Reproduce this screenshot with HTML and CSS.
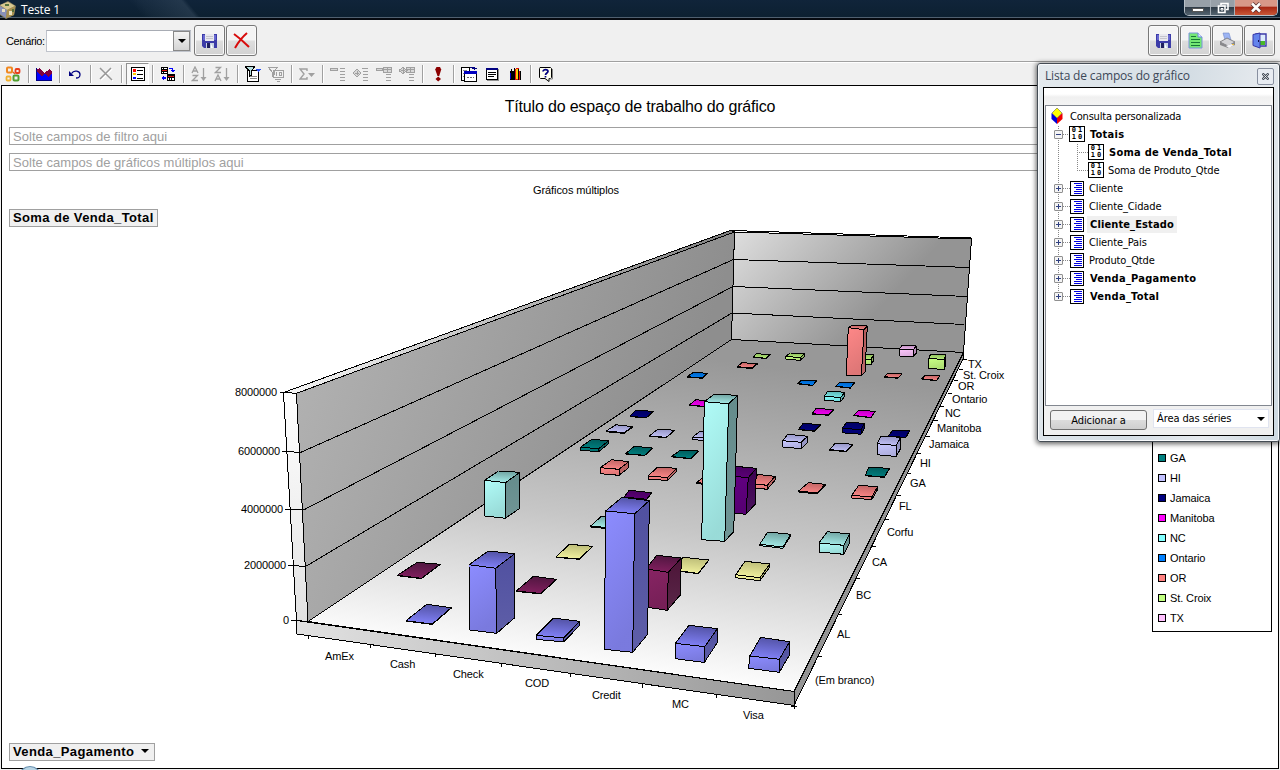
FILE: index.html
```
<!DOCTYPE html>
<html lang="pt">
<head>
<meta charset="utf-8">
<title>Teste 1</title>
<link rel="stylesheet" href="styles.css">
</head>
<body>
<div class="window">
  <header class="titlebar">
    <svg class="app-icon" width="16" height="18" viewBox="0 0 16 18"><path d="M0 4 8 0 16 5 14 14 6 18 0 14Z" fill="#8a8060"/><path d="M0 4 8 1 15 5 7 9Z" fill="#d8c890"/><path d="M0 5 7 9 6 17 0 13Z" fill="#8890b8"/><path d="M7 9 15 5 14 14 6 17Z" fill="#a89050"/><path d="M2 8h3v3H2zM9 10h3v4H9z" fill="#e8e0c0"/><path d="M5 3h4v2H5zM12 8h2v3h-2z" fill="#54703c"/></svg>
    <span class="title">Teste 1</span>
    <div class="caption">
      <span class="cap cap-min"><i></i></span>
      <span class="cap cap-max"><svg width="12" height="12" viewBox="0 0 12 12" fill="none" stroke="#fff" stroke-width="1.600"><path d="M4 3V1.500h7v6H9"/><path d="M1.500 4h6.500v6.500H1.500z"/><path d="M4 6.500h2v1.500H4z" stroke-width="1"/></svg></span>
      <span class="cap cap-close"><svg width="12" height="11" viewBox="0 0 12 11"><path d="M2 1.500 10 9.500M10 1.500 2 9.500" stroke="#5a3030" stroke-width="4.200"/><path d="M2 1.500 10 9.500M10 1.500 2 9.500" stroke="#fff" stroke-width="2.600"/></svg></span>
    </div>
  </header>

  <div class="scenario-bar">
    <label class="scenario-label">Cenário:</label>
    <div class="scenario-combo"><span class="combo-button"><i class="arrow"></i></span></div>
    <button class="big-btn"><svg width="16" height="16" viewBox="0 0 16 16"><path d="M0 1h15v14H2L0 13z" fill="#3c3ca8"/><path d="M1 2h2v5H1zM12 2h2v5h-2z" fill="#6868d0"/><path d="M3 1h9v7H3z" fill="#e8e8ee"/><path d="M4 3h7v1H4zM4 5h7v1H4z" fill="#c4c4cc"/><path d="M4 10h8v5H4z" fill="#c8d4e4"/><path d="M5 10h3v5H5z" fill="#202060"/><path d="M9 11l2 4H9z" fill="#fff"/></svg></button>
    <button class="big-btn"><svg width="17" height="17" viewBox="0 0 17 17"><path d="M1 2 Q8 7 16 15M14 1Q7 7 2 16" fill="none" stroke="#d80c0c" stroke-width="2"/></svg></button>
    <span class="spacer"></span>
    <button class="big-btn"><svg width="16" height="16" viewBox="0 0 16 16"><path d="M0 1h15v14H2L0 13z" fill="#3c3ca8"/><path d="M1 2h2v5H1zM12 2h2v5h-2z" fill="#6868d0"/><path d="M3 1h9v7H3z" fill="#e8e8ee"/><path d="M4 3h7v1H4zM4 5h7v1H4z" fill="#c4c4cc"/><path d="M4 10h8v5H4z" fill="#c8d4e4"/><path d="M5 10h3v5H5z" fill="#202060"/><path d="M9 11l2 4H9z" fill="#fff"/></svg></button>
    <button class="big-btn"><svg width="15" height="17" viewBox="0 0 15 17"><path d="M1 1h9l4 4v11H1z" fill="#74e874" stroke="#7c94dc"/><path d="M10 1v4h4" fill="#dce8ff" stroke="#6c88dc"/><path d="M3 4.500h5M3 7.500h9M3 10.500h9M3 13.500h9" stroke="#187838"/></svg></button>
    <button class="big-btn"><svg width="17" height="17" viewBox="0 0 17 17"><path d="M4 1h6l2 7H6z" fill="#9cb4f4" stroke="#7088c8" stroke-width=".6"/><path d="M1 10 8 6l8 4-7 4z" fill="#d4d4d8" stroke="#707074" stroke-width=".8"/><path d="M1 10v3l8 3 7-3v-3l-7 4z" fill="#88888c"/><path d="M7 14l5-2 3 1-5 3z" fill="#f4f4f8"/><path d="M13 12h2v1h-2z" fill="#f0c040"/></svg></button>
    <button class="big-btn"><svg width="15" height="17" viewBox="0 0 15 17"><path d="M4 2h10v12H4z" fill="#fff" stroke="#3838a8" stroke-width="1.400"/><path d="M8 9h5v4H8z" fill="#48b828"/><path d="M9 3h4v6H9z" fill="#dcecfc"/><path d="M1 2.500 8 1v15l-7-2.500z" fill="#6484ec" stroke="#3838a8"/><path d="M6 8h1v2H6z" fill="#101050"/></svg></button>
  </div>

  <nav class="toolbar">
    <span class="tb"><svg width="16" height="16" viewBox="0 0 16 16" fill="none" stroke-width="2"><rect x="2" y="1.500" width="5" height="5" rx="1" stroke="#f08820"/><rect x="10.500" y="3" width="4" height="4" rx="1" stroke="#e8401c" stroke-width="1.800"/><rect x="1.500" y="10.500" width="4" height="4" rx="1" stroke="#f0b030" stroke-width="1.800"/><rect x="8.500" y="9.500" width="5" height="5" rx="1" stroke="#50a030"/><path d="M8 6l2 2" stroke="#e06028" stroke-width="1.400"/></svg></span>
    <i class="sep"></i>
    <span class="tb"><svg width="16" height="16" viewBox="0 0 16 16" shape-rendering="crispEdges"><path d="M0 4 4 2 8 7 14 3 16 6V14H0z" fill="#800040"/><path d="M0 5 6 10 9 8 12 11 16 8V14H0z" fill="#00f"/><path d="M0 2v12h16" fill="none" stroke="#000080"/></svg></span>
    <i class="sep"></i>
    <span class="tb"><svg width="16" height="16" viewBox="0 0 16 16"><path d="M4.500 7.500C7 3.500 13 5 13 8.500S11 12 9 12" fill="none" stroke="#000080" stroke-width="1.300"/><path d="M2 5v5h5z" fill="#000080"/></svg></span>
    <i class="sep"></i>
    <span class="tb"><svg width="16" height="16" viewBox="0 0 16 16" fill="none"><path d="M3 3 15 15M14 3 3 14" stroke="#fff" stroke-width="1.500"/><path d="M2 2 14 14M13 2 2 13" stroke="#969696" stroke-width="1.500"/></svg></span>
    <i class="sep"></i>
    <span class="tb pressed"><svg width="16" height="16" viewBox="0 0 16 16" shape-rendering="crispEdges"><path d="M1.500 1.500h13v13h-13z" fill="#fff" stroke="#000"/><path d="M3 3h3v3H3z" fill="#f00"/><path d="M3 7h3v2H3z" fill="#fc0"/><path d="M3 11h3v2H3z" fill="#00f"/><path d="M7 4.500h6M7 8.500h6M7 12.500h6" stroke="#000"/></svg></span>
    <i class="sep"></i>
    <span class="tb"><svg width="16" height="16" viewBox="0 0 16 16" shape-rendering="crispEdges"><path d="M1 1h7v7H1zM7 8h8v7H7z" fill="#000"/><path d="M2 2h1v1H2zM4 2h3v1H4zM2 6h1v1H2zM4 6h3v1H4zM8 12h1v2H8zM10 12h1v2h-1zM12 12h2v2h-2z" fill="#fff"/><path d="M2 4h5v1H2zM8 10h6v1H8z" fill="#e01010"/><path d="M9 2h4v2h2l-2 3-3-3h2V3H9zM1 12l3-3v2h2v2H4v2z" fill="#00f"/></svg></span>
    <i class="sep"></i>
    <span class="tb"><svg width="16" height="16" viewBox="0 0 16 16" fill="none" stroke="#a0a0a0" stroke-width="1.300"><path d="M1 7 4 1l3 6M2 5h4M1.500 9.500h5l-5 5h5.500M12.500 2v11"/><path d="M9.500 11h6l-3 4z" fill="#a0a0a0" stroke="none"/></svg></span>
    <span class="tb"><svg width="16" height="16" viewBox="0 0 16 16" fill="none" stroke="#a0a0a0" stroke-width="1.300"><path d="M1.500 1.500h5l-5 5h5.500M1 15 4 9l3 6M2 13h4M12.500 2v11"/><path d="M9.500 11h6l-3 4z" fill="#a0a0a0" stroke="none"/></svg></span>
    <i class="sep"></i>
    <span class="tb"><svg width="16" height="16" viewBox="0 0 16 16" shape-rendering="crispEdges"><path d="M2.500 4.500h11v11h-11z" fill="#fff" stroke="#000"/><path d="M0 .5h10M.5 1l4 4v5l2-1V5l3-4" fill="#b8e0e0" stroke="#000"/><path d="M10 3h6l-3 3z" fill="#2850f0"/><path d="M5 10.500h7M5 12.500h7" stroke="#888"/></svg></span>
    <span class="tb"><svg width="16" height="16" viewBox="0 0 16 16" fill="none" stroke="#a0a0a0" shape-rendering="crispEdges"><path d="M0 1.500h10M1 2l3 4v5l2-2V6l3-4M5.500 4.500h10v7h-10zM8.500 6v4M11 6.500h2v3h-2zM7 13.500h6M8.500 15.500h3"/></svg></span>
    <i class="sep"></i>
    <span class="tb"><svg width="16" height="16" viewBox="0 0 16 16"><path d="M8 5V3H1l4 5-4 5h7v-2" fill="none" stroke="#a0a0a0" stroke-width="1.400"/><path d="M9 7h7l-3.500 4z" fill="#a0a0a0"/></svg></span>
    <i class="sep"></i>
    <span class="tb"><svg width="16" height="16" viewBox="0 0 16 16" fill="#d8d8d8" stroke="#a0a0a0" shape-rendering="crispEdges"><path d="M.5 2.500h7v2h-7zM10 2.500h5M10 5.500h5M10 8.500h5M10 11.500h5M10 14.500h5"/></svg></span>
    <span class="tb"><svg width="16" height="16" viewBox="0 0 16 16" fill="#d8d8d8" stroke="#a0a0a0" shape-rendering="crispEdges"><path d="M4 3 8 7 4 11 0 7zM2 7h4M4 5v4M9 2.500h6M10 5.500h5M10 8.500h5M10 11.500h5M10 14.500h5"/></svg></span>
    <span class="tb"><svg width="16" height="16" viewBox="0 0 16 16" fill="#d8d8d8" stroke="#a0a0a0" shape-rendering="crispEdges"><path d="M.5 2.500h6v2h-6zM7.500 1.500h8v5h-8zM8 3.500h7M11.500 1v5M10 8.500h5M10 11.500h5M10 14.500h5"/></svg></span>
    <span class="tb"><svg width="16" height="16" viewBox="0 0 16 16" fill="#d8d8d8" stroke="#a0a0a0" shape-rendering="crispEdges"><path d="M4 1 8 4.500 4 8 0 4.500zM2 4.500h4M4 2v5M7.500 1.500h8v5h-8zM8 3.500h7M11.500 1v5M10 8.500h5M10 11.500h5M10 14.500h5"/></svg></span>
    <i class="sep"></i>
    <span class="tb"><svg width="16" height="16" viewBox="0 0 16 16"><path d="M6.500 1h3.500l1.200 2.500-2 6.500H7.500L5.200 3.500z" fill="#8c0000"/><path d="M8.200 10.500 11 13l-2.800 2.500L5.500 13z" fill="#8c0000"/></svg></span>
    <i class="sep"></i>
    <span class="tb"><svg width="16" height="16" viewBox="0 0 16 16" shape-rendering="crispEdges"><path d="M.5 1.500h8v13h-8z" fill="#fff" stroke="#000"/><path d="M2 4h4M2 7h2M2 10h2" stroke="#888"/><path d="M3.500 6.500h12v9h-12z" fill="#fff" stroke="#000"/><path d="M3 5h13v3H3z" fill="#0000c0"/><path d="M9 1.500h4v2M11 2.500h5" fill="none" stroke="#000080"/><path d="M6 11.500h2M9 11.500h2M12 11.500h1" stroke="#666"/></svg></span>
    <span class="tb"><svg width="16" height="16" viewBox="0 0 16 16" shape-rendering="crispEdges"><path d="M3 3h12v12H3z" fill="#909090"/><path d="M2.500 2.500h11v11h-11z" fill="#fff" stroke="#000"/><path d="M2 2h12v2H2z" fill="#000080"/><path d="M4 6.500h8M4 8.500h8M4 10.500h6" stroke="#000"/></svg></span>
    <span class="tb"><svg width="16" height="16" viewBox="0 0 16 16" shape-rendering="crispEdges"><path d="M3 5h4v9H3zM4 3h1v2H4zM7 2h1v5H7z" fill="#000"/><path d="M3 7h1v6H3z" fill="#0000c0"/><path d="M7 5l2-3h3v12H7z" fill="#e01010"/><path d="M9 3h2v10H9z" fill="#ffd000"/><path d="M12 5h2v9h-2z" fill="#e01010"/><path d="M7.500 4v10M13.500 5v9M11.500 3v11" stroke="#000"/></svg></span>
    <i class="sep"></i>
    <span class="tb"><svg width="16" height="16" viewBox="0 0 16 16"><path d="M2 1.500h10.500l1 1v9l-1 1H11v3l-4-3H2.500l-1-1v-9z" fill="#fffff0" stroke="#000"/><path d="M14.500 3v10h-3" fill="none" stroke="#888"/><path d="M5 5.500C5 3 10 3 10 5.500 10 7 7.500 7 7.500 9M7.500 10v1.500" fill="none" stroke="#000080" stroke-width="1.700"/></svg></span>
  </nav>

  <main class="workspace">
    <h1 class="ws-title">Título do espaço de trabalho do gráfico</h1>
    <div class="dropzone"><span>Solte campos de filtro aqui</span></div>
    <div class="dropzone"><span>Solte campos de gráficos múltiplos aqui</span></div>
    <h2 class="chart-title">Gráficos múltiplos</h2>
    <div class="field-row"><span class="field-btn">Soma de Venda_Total</span></div>
    <div class="chart-row">
      <svg class="chart" id="chart" width="1149" height="514" viewBox="2 228 1149 514">
        <defs id="defs">
          <linearGradient id="leftWall" gradientUnits="userSpaceOnUse" x1="300" y1="400" x2="640" y2="520"><stop offset="0" stop-color="#b0b0b0"/><stop offset="1" stop-color="#8e8e8e"/></linearGradient>
          <linearGradient id="backWall" gradientUnits="userSpaceOnUse" x1="734" y1="232" x2="850" y2="340"><stop offset="0" stop-color="#dedede"/><stop offset="1" stop-color="#949494"/></linearGradient>
          <linearGradient id="floor" gradientUnits="userSpaceOnUse" x1="480" y1="650" x2="520" y2="335"><stop offset="0" stop-color="#fcfcfc"/><stop offset=".22" stop-color="#e2e2e2"/><stop offset=".46" stop-color="#c6c6c6"/><stop offset=".76" stop-color="#acacac"/><stop offset="1" stop-color="#989898"/></linearGradient>
          <linearGradient id="slab" x1="0" x2="1"><stop offset="0" stop-color="#e2e2e2"/><stop offset="1" stop-color="#969696"/></linearGradient>
          <linearGradient id="edge" x1="0" y1="0" x2="0" y2="1"><stop offset="0" stop-color="#ffffff"/><stop offset="1" stop-color="#e2e2e2"/></linearGradient>
          <linearGradient id="topEdge" x1="0" x2="1"><stop offset="0" stop-color="#f8f8f8"/><stop offset="1" stop-color="#808080"/></linearGradient>
        </defs>
        <g class="room">
          <path fill="url(#topEdge)" d="M283.500 392.500 730.500 230.500 734.500 232 296.500 393.300z"/>
          <path fill="url(#edge)" d="M283.500 392.500 296.500 393.300 308 621.500 296.500 620.500z"/>
          <path fill="url(#leftWall)" d="M296.500 393.300 734.500 232 731.500 339.500 308 621.500z"/>
          <path fill="url(#backWall)" d="M734.500 232 971.500 239 963.500 352.500 731.500 339.500z"/>
          <path fill="url(#floor)" d="M308 621.500 794 691.500 963.500 352.500 731.500 339.500z"/>
          <path fill="url(#slab)" d="M296.500 620.500 794 691.500 794 705.500 297 634z"/>
          <path fill="#949494" d="M794 691.500 963.500 352.500 963.500 358 794 705.500z"/>
          <path fill="none" d="M730.500 230.500 971.500 238M300.500 452.500 733.500 259.500 969.500 267.500M303.500 510 733 286.500 967 296.500M305.500 566.500 732 313 964.500 324.500M287 451.500 300 452.500M290 509.500 303 510M293 565.500 305.500 566.500"/>
          <path fill="none" d="M280 392.500h5M282 451.500h7M285 509.500h7M288 565.500h7M291 620.500h6M308.500 635v4M370.500 644v4M435.500 653v4M501.500 663v4M570.500 673v4M642.500 684v4M716.500 694v4M794 703v6M791 706.500h6"/>
          <path fill="none" d="M818 656.500h4M838 614.500h4M856 578.500h4M872 546.500h4M885 519.500h4M897 495.500h4M907 473.500h4M917 453.500h4M926 436.500h4M934 420.500h4M940 406.500h4M948 393.500h4M954 380.500h4M959 369.500h4M963 359.500h4"/>
        </g>
        <g id="bars" class="bars"></g>
        <g class="labels">
          <text x="277" y="396" text-anchor="end">8000000</text><text x="280" y="455" text-anchor="end">6000000</text><text x="283" y="513" text-anchor="end">4000000</text><text x="286" y="569" text-anchor="end">2000000</text><text x="289" y="624" text-anchor="end">0</text>
          <text x="325" y="660">AmEx</text><text x="390" y="668">Cash</text><text x="453" y="678">Check</text><text x="525" y="687">COD</text><text x="592" y="699">Credit</text><text x="672" y="708">MC</text><text x="743" y="719">Visa</text>
          <text x="968" y="368">TX</text><text x="963" y="379">St. Croix</text><text x="958" y="390">OR</text><text x="952" y="403">Ontario</text><text x="945" y="417">NC</text><text x="937" y="432">Manitoba</text><text x="929" y="448">Jamaica</text><text x="920" y="467">HI</text><text x="910" y="487">GA</text><text x="899" y="510">FL</text><text x="887" y="536">Corfu</text><text x="872" y="566">CA</text><text x="856" y="599">BC</text><text x="837" y="638">AL</text><text x="815" y="684">(Em branco)</text>
        </g>
      </svg>
      <ul class="legend">
        <li><i class="s-ga"></i>GA</li><li><i class="s-hi"></i>HI</li><li><i class="s-jamaica"></i>Jamaica</li><li><i class="s-manitoba"></i>Manitoba</li><li><i class="s-nc"></i>NC</li><li><i class="s-ontario"></i>Ontario</li><li><i class="s-or"></i>OR</li><li><i class="s-croix"></i>St. Croix</li><li><i class="s-tx"></i>TX</li>
      </ul>
    </div>
    <div class="field-row"><span class="field-btn">Venda_Pagamento<i class="arrow"></i></span></div>
  </main>
  <span class="orb"></span>
</div>

<aside class="panel">
  <div class="panel-head"><span>Lista de campos do gráfico</span><span class="panel-close"><svg width="7" height="7" viewBox="0 0 7 7"><path d="M.5.5l6 6m0-6-6 6" stroke="#444c58" stroke-width="2.400"/><path d="M1 1l5 5m0-5-5 5" stroke="#fff" stroke-width=".7"/></svg></span></div>
  <div class="panel-body">
    <div class="tree">
      <svg class="tree-lines" width="60" height="200" viewBox="0 0 60 200"><path d="M12.500 20V190M17 28.500h8M17 82.500h8M17 100.500h8M17 118.500h8M17 136.500h8M17 154.500h8M17 172.500h8M17 190.500h8M31.500 38V64.500M31 46.500h12M31 64.500h12" stroke="#888" stroke-dasharray="1 1" fill="none"/></svg>
      <div class="node root"><svg width="12" height="16" viewBox="0 0 12 16"><path d="M.5 5 6 10v6L.5 11z" fill="#0000d8"/><path d="M11.500 5 6 10v6l5.500-5z" fill="#f00000"/><path d="M6 0 11 5 6 10 1 5z" fill="#ff0" stroke="#444" stroke-width=".5"/></svg><span class="name">Consulta personalizada</span></div>
      <div class="node"><i class="exp minus"></i><span class="digits">0 1<br>1 0</span><span class="name bold">Totais</span></div>
      <div class="node child"><span class="digits">0 1<br>1 0</span><span class="name bold">Soma de Venda_Total</span></div>
      <div class="node child"><span class="digits">0 1<br>1 0</span><span class="name">Soma de Produto_Qtde</span></div>
      <div class="node"><i class="exp"></i><i class="list"></i><span class="name">Cliente</span></div>
      <div class="node"><i class="exp"></i><i class="list"></i><span class="name">Cliente_Cidade</span></div>
      <div class="node"><i class="exp"></i><i class="list"></i><span class="name bold selected">Cliente_Estado</span></div>
      <div class="node"><i class="exp"></i><i class="list"></i><span class="name">Cliente_Pais</span></div>
      <div class="node"><i class="exp"></i><i class="list"></i><span class="name">Produto_Qtde</span></div>
      <div class="node"><i class="exp"></i><i class="list"></i><span class="name bold">Venda_Pagamento</span></div>
      <div class="node"><i class="exp"></i><i class="list"></i><span class="name bold">Venda_Total</span></div>
    </div>
    <div class="panel-foot">
      <button class="add-btn">Adicionar a</button>
      <div class="area-select"><span>Área das séries</span><i class="arrow"></i></div>
    </div>
  </div>
</aside>
<script src="chart.js"></script>
</body>
</html>
```
FILE: styles.css
```
* { box-sizing: border-box; }
body { margin: 0; width: 1280px; height: 770px; overflow: hidden; background: #f0f0f0; font-family: "Liberation Sans", Arial, sans-serif; font-size: 11px; color: #000; }
button { font: inherit; padding: 0; }
.window { position: relative; height: 770px; display: flex; flex-direction: column; }
.arrow { width: 0; height: 0; border: 4px solid transparent; border-top-color: #000; border-bottom: 0; }

.titlebar { height: 20px; flex: none; display: flex; align-items: flex-start; background: linear-gradient(50deg, transparent 110px, rgba(60,80,100,.15) 118px, rgba(60,80,100,.45) 150px, transparent 154px), linear-gradient(#10243a, #0c2030); border-bottom: 2px solid #060a10; box-shadow: inset 0 -1px #506070; color: #fff; }
.app-icon { margin-top: 1px; }
.title { margin-left: 5px; font: 12px/19px "Open Sans", "Noto Sans", sans-serif; letter-spacing: -.15px; flex: 1; }
.caption { display: flex; height: 16px; margin-right: 2px; border: 1px solid #b8c0c8; border-top: 0; border-radius: 0 0 5px 5px; overflow: hidden; }
.cap { display: flex; align-items: center; justify-content: center; background: linear-gradient(#98a0a8 0 45%, #303c48 50%, #546470); border-right: 1px solid #a8b0b8; }
.cap-min { width: 26px; }
.cap-min i { width: 12px; height: 4px; background: #fff; border: 1px solid #555; margin-top: 4px; }
.cap-max { width: 24px; }
.cap-close { width: 42px; border: 0; background: linear-gradient(#d89888 0 40%, #a82814 50%, #c85838); }

.scenario-bar { height: 41px; flex: none; display: flex; align-items: center; padding: 0 5px 0 6px; }
.scenario-label { width: 40px; letter-spacing: -.35px; white-space: nowrap; }
.scenario-combo { width: 145px; height: 22px; margin-right: 3px; background: #fff; border: 1px solid #c0c4cc; border-top-color: #a8acb4; display: flex; justify-content: flex-end; }
.combo-button { width: 17px; display: flex; align-items: center; justify-content: center; background: linear-gradient(#f4f4f4, #d4d4d4); border: 1px solid #888; }
.combo-button .arrow { border-width: 4px 4px 0; }
.big-btn { width: 31px; height: 31px; margin-right: 1px; display: flex; align-items: center; justify-content: center; border: 1px solid #787878; border-radius: 3px; background: linear-gradient(#f4f4f4 48%, #dedede 52%, #d2d2d2); box-shadow: inset 0 0 0 1px #fafafa; }
.big-btn:last-child { margin-right: 0; }
.spacer { flex: 1; }

.toolbar { height: 24px; flex: none; display: flex; align-items: center; padding-left: 2px; border-top: 1px solid #a0a0a0; box-shadow: inset 0 1px #fff; }
.tb { width: 23px; height: 22px; padding-right: 1px; display: flex; align-items: center; justify-content: center; }
.pressed { padding: 0; background: #f8f8f8; border: 1px solid #fff; border-top-color: #909090; border-left-color: #909090; }
.sep { width: 8px; height: 18px; background: linear-gradient(#a0a0a0, #a0a0a0) 3px 0 / 1px 18px no-repeat, linear-gradient(#fff, #fff) 4px 0 / 1px 18px no-repeat; }

.workspace { height: 684px; margin: 0 1px; flex: none; display: flex; flex-direction: column; background: #fff; border: 1px solid #000; }
.ws-title { margin: 0; height: 41px; padding-top: 1px; font-size: 16px; font-weight: 400; line-height: 39px; text-align: center; letter-spacing: -.18px; }
.dropzone { height: 18px; margin: 0 7px 8px; border: 1px solid #a0a0a0; padding-left: 3px; color: #a0a0a0; font-size: 13px; line-height: 17px; letter-spacing: .04px; }
.chart-title { margin: 0; width: 1148px; height: 30px; font-size: 11px; line-height: 23px; font-weight: 400; text-align: center; letter-spacing: -.08px; }
.field-row { height: 18px; flex: none; padding-left: 7px; display: flex; }
.field-btn { display: flex; align-items: center; height: 18px; padding: 0 3px; border: 1px solid #a0a0a0; background: #f0f0f0; font-size: 13px; font-weight: 700; line-height: 16px; letter-spacing: .38px; }
.field-btn .arrow { margin: -2px 2px 0 7px; }
.chart-row { height: 515px; margin-top: 1px; flex: none; display: flex; align-items: flex-start; }
.chart { flex: none; }
.room path { stroke: #000; stroke-width: 1; shape-rendering: crispEdges; }
.bars polygon { stroke: #000; stroke-width: 1; shape-rendering: crispEdges; stroke-linejoin: round; }
.labels text { font: 11px "Liberation Sans", Arial, sans-serif; letter-spacing: -.12px; }

.legend { list-style: none; width: 120px; margin: 198px 0 0 1px; padding: 21px 0 3px; border: 1px solid #000; background: #fff; letter-spacing: -.1px; }
.legend li { height: 20px; display: flex; align-items: center; padding-left: 5px; }
.legend i { width: 8px; height: 8px; margin-right: 4px; border: 1px solid #000; }
.s-ga { background: #008080; } .s-hi { background: #c0c0ff; } .s-jamaica { background: #000080; }
.s-manitoba { background: #f0f; } .s-nc { background: #80ffff; } .s-ontario { background: #0080ff; }
.s-or { background: #ff8080; } .s-croix { background: #c0ff80; } .s-tx { background: #ffc0ff; }
.orb { position: absolute; left: 19px; top: 766px; width: 22px; height: 20px; border-radius: 50%; background: #b8d4e4; border: 1px solid #6890b0; }

.panel { position: absolute; left: 1037px; top: 63px; width: 243px; height: 379px; padding: 0 5px; border: 1px solid #444c54; border-radius: 3px; background: linear-gradient(100deg, #e4eaee, #d4dde4 50%, #e6eaee 75%, #ccd8e0); box-shadow: inset 0 0 0 1px #f8fafc, 0 1px 5px 1px rgba(0,0,0,.6); font-family: "DejaVu Sans Condensed", "DejaVu Sans", sans-serif; }
.panel-head { height: 23px; display: flex; justify-content: space-between; align-items: center; padding-left: 2px; font: 12px "Open Sans", "Noto Sans", sans-serif; letter-spacing: -.16px; color: #3c4858; }
.panel-close { width: 17px; height: 17px; border: 1px solid #8890a0; border-radius: 2px; background: #e8ecf2; display: flex; align-items: center; justify-content: center; margin: 2px 0 0; }
.panel-body { height: 349px; width: 231px; border: 1px solid #000; background: linear-gradient(#fff 6px, #f0f0f0 9px, #f4f4f4 17px, #f0f0f0 18px); padding: 17px 1px 0; display: flex; flex-direction: column; }
.tree { position: relative; height: 301px; border: 1px solid #828790; background: #fff; padding-top: 1px; }
.tree-lines { position: absolute; left: 0; top: 0; }
.node { position: relative; height: 18px; display: flex; align-items: center; padding-left: 8px; }
.root { padding-left: 5px; }
.root .name { margin-left: 4px; letter-spacing: -.2px; }
.child { padding-left: 42px; }
.name { line-height: 17px; padding: 0 3px; margin-left: 1px; white-space: nowrap; letter-spacing: -.12px; }
.bold { font-weight: 700; letter-spacing: .26px; margin-left: 2px; }
.selected { letter-spacing: .12px; background: #f0f0f0; }
.exp { width: 9px; height: 9px; margin-right: 6px; border: 1px solid #909090; border-radius: 1px; background: linear-gradient(#304080, #304080) 1px 3px / 5px 1px no-repeat, linear-gradient(#304080, #304080) 3px 1px / 1px 5px no-repeat, #f4f4f4; }
.minus { background: linear-gradient(#304080, #304080) 1px 3px / 5px 1px no-repeat, #f4f4f4; }
.digits { width: 16px; height: 16px; border: 1px solid #000; background: #fff; font: 700 7px/7px "DejaVu Sans Mono", monospace; word-spacing: -2px; text-align: center; white-space: nowrap; }
.list { width: 14px; height: 15px; margin: 0 1px; border: 1px solid #000; background: linear-gradient(#fff, #fff) 2px 3px / 3px 1px no-repeat, linear-gradient(#fff, #fff) 2px 7px / 3px 1px no-repeat, repeating-linear-gradient(#0000e0 0 1px, #fff 1px 2px) 3px 1px / 8px 11px no-repeat, #fff; }
.panel-foot { flex: 1; display: flex; align-items: flex-start; padding: 3px 1px 0 5px; }
.add-btn { width: 97px; height: 20px; margin-top: 1px; border: 1px solid #707070; border-radius: 3px; background: linear-gradient(#f2f2f2 48%, #dcdcdc 52%, #cfcfcf); letter-spacing: -.1px; }
.area-select { width: 116px; height: 19px; margin-left: 6px; display: flex; align-items: center; justify-content: space-between; padding: 0 3px; background: #fff; border: 1px solid #e0e4f0; letter-spacing: -.1px; }
```
FILE: chart.js
```
// Colours per series: front face, light and dark end of the top face, side face.
const palette = {
  branco: ['#8c8cff', '#8484fc', '#5252a4', '#5050a0'],
  al: ['#882464', '#842060', '#501640', '#4c1438'],
  bc: ['#ffffa0', '#f4f4a0', '#bcbc78', '#b8b870'],
  ca: ['#b0fcf8', '#a8f0ec', '#70a2a0', '#648c8c'],
  corfu: ['#640084', '#5c0078', '#480060', '#3c0050'],
  fl: ['#ff8888', '#fc8888', '#c06464', '#b45c5c'],
  ga: ['#008080', '#008080', '#005c5c', '#005858'],
  hi: ['#c8c8ff', '#c4c4f8', '#9494c4', '#9090c0'],
  jamaica: ['#000080', '#000080', '#000060', '#000058'],
  manitoba: ['#e800e8', '#f800f8', '#c000c0', '#a800a8'],
  nc: ['#84ffff', '#7cecec', '#5cb4b4', '#58a8a8'],
  ontario: ['#0080ff', '#0080f8', '#0064c4', '#005cb0'],
  croix: ['#c8ff84', '#b8f078', '#8cb85c', '#88b058'],
  tx: ['#ffc8ff', '#f0b8f0', '#c090c0', '#b888b8']
};

// [series, front-left, front-right, back-right, back-left of the top face,
//  then either a height or the front-left, front-right, back-right of the base]
const bars = [
  ['tx', 899.3,349, 913.3,349.7, 916.3,346, 902.3,345.3, 7],
  ['croix', 753,356.7, 765.7,358.3, 770.3,354.7, 756.7,353.7, .3],
  ['croix', 785.7,356.3, 800,357.7, 804.7,353.7, 790.3,353, 2.7],
  ['croix', 857,358.5, 871,359.3, 873.7,354.7, 860,353.7, 5.5],
  ['croix', 928.7,358.7, 944.3,359.3, 945.7,354.7, 930.7,354, 10],
  ['fl', 737.3,366.7, 751.7,368, 757.3,363.7, 742,362.7, .5],
  ['fl', 848.3,327.7, 864,329.7, 867.3,326, 852.3,325.3, 846.3,375.3, 861.3,376, 865,372.3],
  ['fl', 884.3,376.7, 898,378, 901.7,374, 887.7,373.3, .3],
  ['fl', 921.7,378.7, 936.7,380.5, 939.7,375.7, 925.3,375, .3],
  ['ontario', 687.3,376.7, 702.3,378, 707.3,373.3, 693.3,372.3, .3],
  ['ontario', 797.7,383.5, 812.7,385.3, 816.7,380.7, 801.7,380, .3],
  ['ontario', 835.7,386.3, 850.3,387.8, 854.7,382.7, 840,382, .3],
  ['nc', 824.3,396, 840.7,397.7, 844.7,392.3, 828,391, 4],
  ['manitoba', 689.3,405, 706,406.5, 711,401, 695.7,399.7, .3],
  ['manitoba', 812,413.7, 828.3,415, 833.7,409.7, 816.3,408.3, .3],
  ['manitoba', 853.7,415.3, 870.7,417.5, 875.3,411.3, 858.7,410.3, .3],
  ['jamaica', 630,416.3, 646,417.7, 653.7,411.3, 636,410.3, .3],
  ['jamaica', 798.7,429.3, 814.7,431, 820.3,424.7, 803,423.3, .3],
  ['jamaica', 842.3,428.3, 861,429.7, 864.7,423.3, 846.7,422.3, 4.5],
  ['jamaica', 888.3,436, 905.7,437.5, 909.7,430.7, 893,430, .3],
  ['hi', 606.3,431, 624,432.7, 632.3,426.7, 616,424.7, .7],
  ['hi', 649.3,436, 666.3,437.3, 674.3,430.3, 658,429, .3],
  ['hi', 692.7,437, 709,438.5, 716,433, 700,431.3, 2.5],
  ['hi', 782.7,440.7, 801,442.3, 807.7,436.3, 787.7,434.3, 6.3],
  ['hi', 829.3,449.5, 846.3,451.3, 852.7,444.3, 835.7,443, .5],
  ['hi', 877,443.7, 896.3,445.5, 900.7,437.3, 881.3,436, 11],
  ['ga', 580.3,447.3, 598.7,448.7, 608.7,440.7, 591.7,439.3, 3],
  ['ga', 625.7,453.7, 644.7,455.3, 652.3,448, 634.3,446.3, .3],
  ['ga', 671.3,456.5, 690.7,458.5, 698.3,451, 680.7,450, .3],
  ['ga', 865.3,475.5, 884.3,477, 889.7,468.3, 868.7,467.3, .3],
  ['fl', 600,467.7, 619,469.3, 628.7,461.7, 611.7,459.7, 6],
  ['fl', 648,476, 667.3,477.5, 676.7,468.3, 657.7,467, 3],
  ['fl', 696.7,482.3, 714,485, 722,476, 708,474, 1],
  ['fl', 748,483.3, 767.3,485.3, 775,476.3, 758,474.5, 4],
  ['fl', 798.7,491, 817,493, 825.3,484.3, 808.3,482.7, 1],
  ['fl', 851.7,495.3, 871.7,497, 877.7,486.7, 858.7,485.3, 2.7],
  ['corfu', 624,497, 646.7,499.3, 651.7,492.7, 629.3,490.3, .4],
  ['corfu', 725,475.5, 748.3,477.7, 756.3,468.3, 735,466.3, 724,512, 746,514.3, 755.3,504],
  ['ca', 484.7,480.3, 505.7,482.7, 519.7,472.3, 498.3,471, 485,516, 505.3,518.3, 519.7,508.3],
  ['ca', 590.7,526, 612,528, 624,518, 601.7,516, 1],
  ['ca', 704.3,401.7, 728.7,403.7, 737.7,395.3, 714.3,394.3, 701.7,539.7, 724.7,541.3, 733.7,531.7],
  ['ca', 759.7,544.3, 783,547, 790.7,534.3, 767.7,532, 1.3],
  ['ca', 819,543, 843.7,545.3, 849.7,534, 827.3,531.7, 9],
  ['bc', 556,557, 579.3,559, 592.7,546.3, 569.3,544.3, .3],
  ['bc', 673,570, 698.3,573.5, 708.7,560, 683.3,557.3, .3],
  ['bc', 735.7,574.7, 760,577.7, 769.7,564, 745,561.3, 3],
  ['al', 397.3,575.3, 421.3,578.3, 440,564.3, 417.3,562.3, .4],
  ['al', 516.3,591, 541,593.5, 556,579.3, 533.3,576.3, .4],
  ['al', 646,569, 668.3,572.3, 681.3,558, 656.7,555.3, 645,607, 667.3,610.3, 680.3,595],
  ['branco', 406,620.7, 432.3,624, 451.3,607.7, 426.7,604.3, .4],
  ['branco', 469,564.7, 495.7,568.3, 514.7,553.7, 488.3,551, 469.7,630, 496.7,633.3, 514.7,617.7],
  ['branco', 536.3,635.3, 563.7,638, 579.7,621.3, 553.3,618, 4],
  ['branco', 605.7,511, 634.7,513.7, 649.3,500.7, 622,497.3, 604.3,649.3, 632.7,652.3, 647.7,634.3],
  ['branco', 675.3,643.3, 704.7,646.7, 717.3,628.7, 689,625.3, 675.3,658.7, 704.3,662.5, 717.3,642.7],
  ['branco', 749.7,656, 779.3,659.3, 789.7,641.7, 760.7,637.3, 748.7,668.3, 779.3,672.3, 789.7,654.7]
];

const NS = 'http://www.w3.org/2000/svg';
const defs = document.getElementById('defs');
const layer = document.getElementById('bars');

function gradient(id, from, to, x1, y1, x2, y2) {
  const g = document.createElementNS(NS, 'linearGradient');
  g.id = id;
  Object.entries({ x1, y1, x2, y2 }).forEach(([k, v]) => g.setAttribute(k, v));
  [from, to].forEach((color, i) => {
    const stop = document.createElementNS(NS, 'stop');
    stop.setAttribute('offset', i);
    stop.setAttribute('stop-color', color);
    g.appendChild(stop);
  });
  defs.appendChild(g);
}

for (const [name, [front, light, dark, side]] of Object.entries(palette)) {
  gradient(name + '-top', light, dark, .3, 1, .5, 0);
  gradient(name + '-front', front, `color-mix(in srgb, ${front} 87%, black)`, 0, 0, .3, 1);
  gradient(name + '-side', side, `color-mix(in srgb, ${side} 92%, white)`, 0, 0, 0, 1);
}

function face(points, fill) {
  const p = document.createElementNS(NS, 'polygon');
  p.setAttribute('points', points.join(' '));
  p.setAttribute('fill', fill);
  layer.appendChild(p);
}

for (const [name, ...v] of bars) {
  const [ax, ay, bx, by, cx, cy, dx, dy, ...rest] = v;
  const base = rest.length === 1 ? [ax, ay + rest[0], bx, by + rest[0], cx, cy + rest[0]] : rest;
  const [ex, ey, fx, fy, gx, gy] = base;
  face([bx, by, cx, cy, gx, gy, fx, fy], `url(#${name}-side)`);
  face([ax, ay, bx, by, fx, fy, ex, ey], `url(#${name}-front)`);
  face([ax, ay, bx, by, cx, cy, dx, dy], `url(#${name}-top)`);
}
```
